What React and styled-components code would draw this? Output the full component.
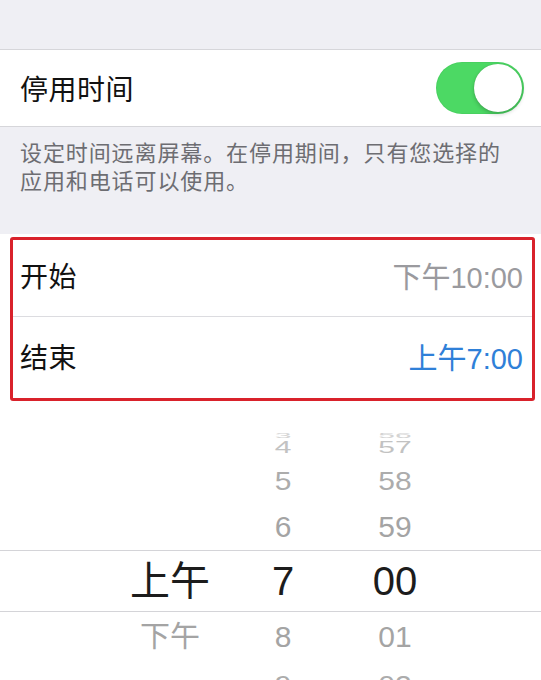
import React from "react";
import styled, { createGlobalStyle } from "styled-components";

const GlobalStyle = createGlobalStyle`
  html, body {
    margin: 0;
    padding: 0;
    background: #efeff4;
  }
  body {
    font-family: "Liberation Sans", "Noto Sans CJK SC", sans-serif;
  }
`;

const Screen = styled.div`
  width: 541px;
  height: 680px;
  overflow: hidden;
  display: flex;
  flex-direction: column;
  background: #efeff4;
`;

const TopBand = styled.div`
  height: 49px;
  border-bottom: 1px solid #d6d6da;
  flex-shrink: 0;
`;

const ToggleRow = styled.div`
  height: 76px;
  background: #fff;
  border-bottom: 1px solid #d6d6da;
  display: flex;
  align-items: center;
  justify-content: space-between;
  padding: 0 17px 0 20px;
  flex-shrink: 0;
`;

const Label = styled.span`
  font-size: 28px;
  color: #111;
  letter-spacing: 0.5px;
`;

const Switch = styled.div`
  width: 88px;
  height: 52px;
  border-radius: 26px;
  background: #4cd964;
  position: relative;
  box-shadow: inset 0 0 0 1px rgba(0, 0, 0, 0.04);
`;

const Knob = styled.div`
  position: absolute;
  top: 2px;
  right: 2px;
  width: 48px;
  height: 48px;
  border-radius: 50%;
  background: #fff;
  box-shadow: 0 2px 4px rgba(0, 0, 0, 0.22), 0 0 1px rgba(0, 0, 0, 0.2);
`;

const Note = styled.p`
  margin: 0;
  padding: 13px 20px 0 20px;
  height: 107px;
  box-sizing: border-box;
  font-size: 22px;
  line-height: 28px;
  letter-spacing: 0.9px;
  color: #6d6d72;
  flex-shrink: 0;
`;

const Group = styled.div`
  background: #fff;
  padding: 3px 6px 0 10px;
  flex-shrink: 0;
`;

const Frame = styled.div`
  border: 3px solid #d9222b;
  border-radius: 3px;
`;

const TimeRow = styled.div`
  height: ${(p) => p.h}px;
  box-sizing: border-box;
  display: flex;
  align-items: center;
  justify-content: space-between;
  padding: 0 9px ${(p) => p.lift || 0}px 7px;
  border-bottom: ${(p) => (p.divided ? "1px solid #dcdce0" : "none")};
`;

const TimeValue = styled.span`
  font-size: 29px;
  color: ${(p) => (p.active ? "#2f80d8" : "#9a9a9e")};
`;

const Picker = styled.div`
  flex: 1;
  background: #fff;
  display: flex;
  flex-direction: column;
  padding-top: 19px;
`;

const PickRow = styled.div`
  height: ${(p) => p.h}px;
  flex-shrink: 0;
  display: grid;
  grid-template-columns: 120px 106px 118px;
  padding-left: 110px;
  align-items: center;
  border-top: ${(p) => (p.selected ? "1px solid #d4d4d8" : "none")};
  border-bottom: ${(p) => (p.selected ? "1px solid #d4d4d8" : "none")};
`;

const Cell = styled.span`
  text-align: center;
  font-size: ${(p) => (p.selected ? 40 : 30)}px;
  color: ${(p) => (p.selected ? "#1c1c1c" : p.tone)};
  transform: scaleY(${(p) => p.squash});
  line-height: 1;
  display: block;
`;

const rows = [
  { h: 12, squash: 0.25, tone: "#d4d4d4", ap: "", hr: "3", mn: "56" },
  { h: 26, squash: 0.55, tone: "#c2c2c2", ap: "", hr: "4", mn: "57" },
  { h: 46, squash: 0.85, tone: "#acacac", ap: "", hr: "5", mn: "58" },
  { h: 46, squash: 0.97, tone: "#a4a4a4", ap: "", hr: "6", mn: "59" },
  { h: 60, squash: 1, selected: true, ap: "上午", hr: "7", mn: "00" },
  { h: 50, squash: 0.97, tone: "#a4a4a4", ap: "下午", hr: "8", mn: "01" },
  { h: 46, squash: 0.85, tone: "#acacac", ap: "", hr: "9", mn: "02" },
];

export default function App() {
  return (
    <>
      <GlobalStyle />
      <Screen>
        <TopBand />
        <ToggleRow>
          <Label>停用时间</Label>
          <Switch>
            <Knob />
          </Switch>
        </ToggleRow>
        <Note>
          设定时间远离屏幕。在停用期间，只有您选择的
          <br />
          应用和电话可以使用。
        </Note>
        <Group>
          <Frame>
            <TimeRow h={77} lift={7} divided>
              <Label>开始</Label>
              <TimeValue>下午10:00</TimeValue>
            </TimeRow>
            <TimeRow h={81} lift={4}>
              <Label>结束</Label>
              <TimeValue active>上午7:00</TimeValue>
            </TimeRow>
          </Frame>
        </Group>
        <Picker>
          {rows.map((r) => (
            <PickRow key={r.hr} h={r.h} selected={r.selected}>
              <Cell selected={r.selected} tone={r.tone} squash={r.squash}>
                {r.ap}
              </Cell>
              <Cell selected={r.selected} tone={r.tone} squash={r.squash}>
                {r.hr}
              </Cell>
              <Cell selected={r.selected} tone={r.tone} squash={r.squash}>
                {r.mn}
              </Cell>
            </PickRow>
          ))}
        </Picker>
      </Screen>
    </>
  );
}
